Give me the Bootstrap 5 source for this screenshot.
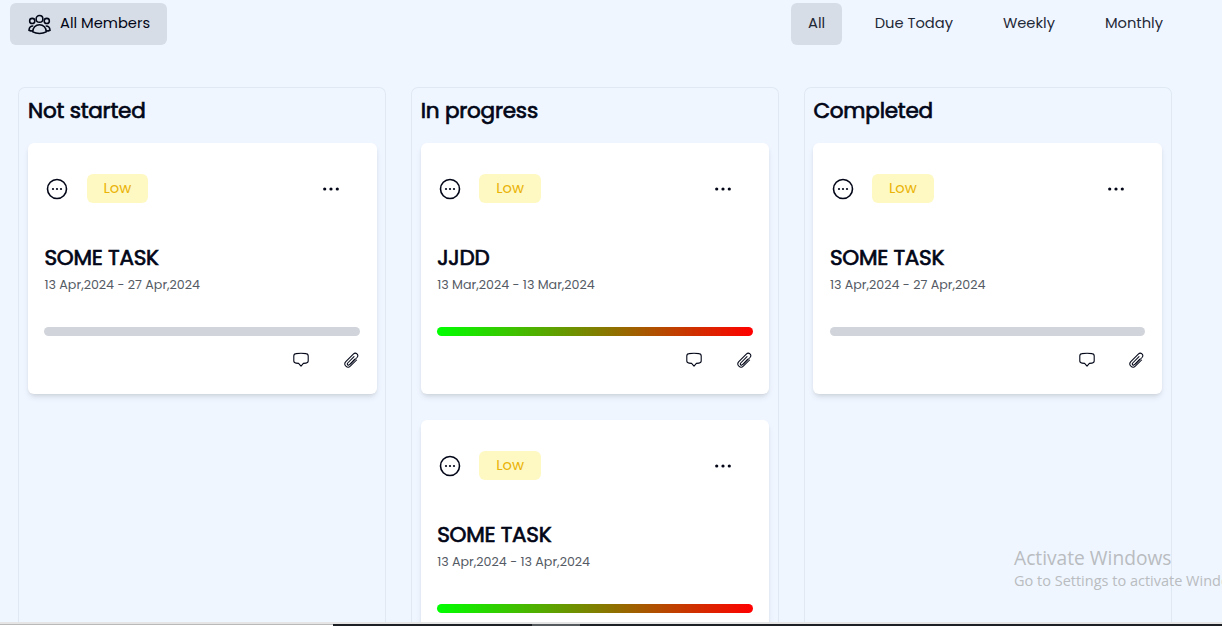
<!DOCTYPE html>
<html lang="en">
<head>
<meta charset="utf-8">
<meta name="viewport" content="width=device-width, initial-scale=1">
<title>Task board</title>
<link href="https://cdn.jsdelivr.net/npm/bootstrap@5.3.0/dist/css/bootstrap.min.css" rel="stylesheet">
<style>
body{background:#eff6ff;color:#020617;font-family:Poppins,Inter,"Liberation Sans",sans-serif;font-size:14.7px}
.screen{height:626px}
.topbar{height:45px;padding:3px 42px 0 10px}
.pill{height:42px;border-radius:6px;line-height:40px;color:#1f2937;padding:0 17px}
.pill.active{background:#d6dde6}
.pill.range{padding:0 16.500px}
.members{width:157px;padding:0 0 0 18px;color:#020617}
.members span{margin-left:9px;margin-top:-2px}
.board{gap:25px;padding:42px 50.5px 0 18.4px}
.lane{flex:1 1 0;border:1px solid #e0e8f3;border-bottom:0;border-radius:7px 7px 0 0;padding:0 8.6px 0 8.6px}
.lane h2{font-size:21.5px;letter-spacing:-.2px;font-weight:400;-webkit-text-stroke:.7px currentColor;line-height:30px;margin:8px 0 17px}
.task{height:251px;background:#fff;border-radius:6px;box-shadow:0 4px 6px -1px rgba(0,0,0,.1),0 2px 4px -2px rgba(0,0,0,.1);padding:31px 16.5px 0;margin-bottom:26px}
.status{margin:0 0 0 2px}
.level{width:61.500px;height:29px;border-radius:6px;background:#fef9c3;color:#eab308;line-height:28px;margin-left:18.200px}
.kebab{margin:0 20.500px 0 auto}
.task h3{font-size:21.5px;letter-spacing:-.25px;font-weight:400;-webkit-text-stroke:.7px currentColor;line-height:26px;margin:42px 0 0}
.dates{font-size:12.65px;line-height:18px;color:#555b65;margin:5px 0 0}
.meter{height:9px;border-radius:5px;background:#d1d5db;margin-top:33px}
.meter.spent{background:linear-gradient(90deg,#0f0,#f00)}
.attach{margin:0 1.200px 0 33.500px}
.window-edge{height:2px;background:#e5e5e5}
.taskbar{height:2px;background:#1d2125}
.search{width:333px;background:linear-gradient(#b9b9b9 50%,#fff 50%)}
.running{width:48px;background:#555a5e;margin-left:199px}
.watermark{left:1014px;top:545px;color:#b9bcc0;font-family:"Segoe UI","Open Sans",sans-serif;white-space:nowrap;width:208px}
.watermark-title{font-size:19.200px;line-height:26px}
.watermark-hint{font-size:14.500px;line-height:20px}
svg{display:block;flex:none}
</style>
</head>
<body class="overflow-hidden">
<svg width="0" height="0" class="position-absolute"><defs>
<symbol id="people" viewBox="0 0 24 24"><g fill="none" stroke="currentColor" stroke-width="1.6"><circle cx="12" cy="6.2" r="3.5"/><circle cx="4.4" cy="8.3" r="2.7"/><circle cx="19.6" cy="8.3" r="2.7"/><path d="M5 19.7c-.2-4.500 3-7.400 7-7.400s7.200 2.900 7 7.400c-4 2.200-10 2.200-14 0zM5.500 13.500c-2.800-.2-4.300 1.600-4.500 4.500 1.200.6 2.500.8 4 .8M18.500 13.500c2.800-.2 4.300 1.600 4.500 4.500-1.200.6-2.500.8-4 .8"/></g></symbol>
<symbol id="status" viewBox="0 0 22 22"><circle cx="11" cy="11" r="9.500" fill="none" stroke="currentColor" stroke-width="1.600"/><g fill="currentColor"><circle cx="7" cy="11" r="1.100"/><circle cx="11" cy="11" r="1.100"/><circle cx="15" cy="11" r="1.100"/></g></symbol>
<symbol id="more" viewBox="0 0 18 6"><g fill="currentColor"><circle cx="2.700" cy="3" r="1.600"/><circle cx="9" cy="3" r="1.600"/><circle cx="15.300" cy="3" r="1.600"/></g></symbol>
<symbol id="note" viewBox="0 0 16 16"><path d="M3 1.600Q8 .8 13 1.600Q15.200 1.900 15.200 4V8.800Q15.200 10.900 13 11.100L10.400 11.400L8 14.200L5.600 11.400L3 11.100Q.8 10.900.8 8.800V4Q.8 1.900 3 1.600Z" fill="none" stroke="currentColor" stroke-width="1.100" stroke-linejoin="round"/></symbol>
<symbol id="clip" viewBox="0 0 16 16"><path d="M11.800 7.200 6.500 12.600c-1.300 1.300-3-.3-1.800-1.600L11 4.600M13.600 8 7.300 14.200c-2.900 2.700-7.400-1.300-4.500-4.500L10.300 2.100c2.500-2.400 6 .9 3.700 3.400L7.600 12" fill="none" stroke="currentColor" stroke-width="1.050" stroke-linecap="round"/></symbol>
</defs></svg>
<div class="screen d-flex flex-column position-relative overflow-hidden">
<header class="topbar d-flex justify-content-between">
<div class="pill active members d-flex align-items-center"><svg width="23" height="23"><use href="#people"/></svg><span>All Members</span></div>
<nav class="d-flex"><div class="pill range active">All</div><div class="pill ms-3">Due Today</div><div class="pill ms-3">Weekly</div><div class="pill ms-3">Monthly</div></nav>
</header>
<main class="board d-flex flex-grow-1 overflow-hidden" id="board"></main>
<div class="window-edge"></div>
<footer class="taskbar d-flex"><div class="search"></div><div class="running"></div></footer>
<div class="watermark position-absolute"><div class="watermark-title">Activate Windows</div><div class="watermark-hint">Go to Settings to activate Windows.</div></div>
</div>
<script>
const lanes = [
  ["Not started", [["SOME TASK", "13 Apr,2024 - 27 Apr,2024", false]]],
  ["In progress", [["JJDD", "13 Mar,2024 - 13 Mar,2024", true], ["SOME TASK", "13 Apr,2024 - 13 Apr,2024", true]]],
  ["Completed", [["SOME TASK", "13 Apr,2024 - 27 Apr,2024", false]]]
];
const card = ([title, dates, spent]) => `<article class="task">
  <div class="d-flex align-items-center"><svg class="status" width="22" height="22"><use href="#status"/></svg><div class="level text-center">Low</div><svg class="kebab" width="18" height="6"><use href="#more"/></svg></div>
  <h3>${title}</h3><p class="dates">${dates}</p><div class="meter ${spent ? "spent" : ""}"></div>
  <div class="d-flex justify-content-end mt-3"><svg width="16" height="16"><use href="#note"/></svg><svg class="attach" width="16" height="16"><use href="#clip"/></svg></div></article>`;
document.getElementById("board").innerHTML = lanes.map(([name, tasks]) => `<section class="lane"><h2>${name}</h2>${tasks.map(card).join("")}</section>`).join("");
</script>
</body>
</html>
